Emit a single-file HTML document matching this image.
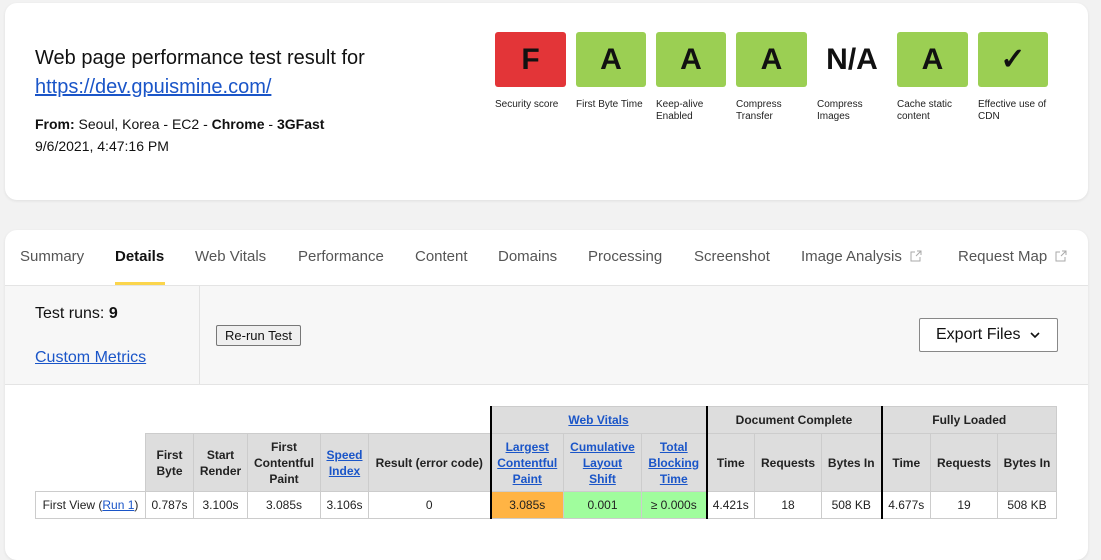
<!DOCTYPE html>
<html><head><meta charset="utf-8"><style>
*{box-sizing:border-box;margin:0;padding:0}
body{width:1101px;height:537px;background:#f2f2f2;font-family:"Liberation Sans",sans-serif;position:relative;overflow:hidden;color:#111}
.card{position:absolute;background:#fff;border-radius:12px;box-shadow:0 1px 3px rgba(0,0,0,.08)}
.abs{position:absolute}
a{color:#1a55c8;text-decoration:underline}
.g{position:absolute;top:32px;width:71px;height:55px;border-radius:3px;background:#9bcf53;font:bold 30px/55px "Liberation Sans",sans-serif;text-align:center;color:#111}
.gl{position:absolute;top:99px;font-size:10px;line-height:12px;color:#222;width:80px}
.tab{position:absolute;top:247px;font-size:15px;color:#555;line-height:20px}
.ext{display:inline-block;width:12px;height:12px;margin-left:8px;vertical-align:-1px}
table{position:absolute;left:35px;top:406px;border-collapse:collapse;table-layout:fixed;font-size:12px}
td,th{border:1px solid #ccc;text-align:center;padding:0;line-height:16px}
th{background:#ddd;font-weight:bold;color:#222}
th.e{background:#fff;border:none}
td{height:27px;color:#222}
.bl{border-left:2px solid #000}
</style></head><body>
<div class="card" style="left:5px;top:3px;width:1083px;height:197px"></div>
<div class="abs" style="left:35px;top:44px;font-size:20px;line-height:28px">Web page performance test result for<br><a href="#" style="line-height:30px">https://dev.gpuismine.com/</a></div>
<div class="abs" style="left:35px;top:113px;font-size:14px;line-height:22px"><b>From:</b> Seoul, Korea - EC2 - <b>Chrome</b> - <b>3GFast</b><br>9/6/2021, 4:47:16 PM</div>
<div class="g" style="left:495px;background:#e33538">F</div>
<div class="g" style="left:576px;width:70px">A</div>
<div class="g" style="left:656px;width:70px">A</div>
<div class="g" style="left:736px">A</div>
<div class="g" style="left:817px;width:70px;background:#fff">N/A</div>
<div class="g" style="left:897px">A</div>
<div class="g" style="left:978px;width:70px">✓</div>
<div class="gl" style="left:495px">Security score</div>
<div class="gl" style="left:576px">First Byte Time</div>
<div class="gl" style="left:656px">Keep-alive<br>Enabled</div>
<div class="gl" style="left:736px">Compress<br>Transfer</div>
<div class="gl" style="left:817px">Compress<br>Images</div>
<div class="gl" style="left:897px">Cache static<br>content</div>
<div class="gl" style="left:978px">Effective use of<br>CDN</div>

<div class="card" style="left:5px;top:230px;width:1083px;height:330px"></div>
<div class="tab" style="left:20px">Summary</div>
<div class="tab" style="left:115px;color:#111;font-weight:bold">Details</div>
<div class="abs" style="left:115px;top:282px;width:50px;height:3px;background:#fbd54c"></div>
<div class="tab" style="left:195px">Web Vitals</div>
<div class="tab" style="left:298px">Performance</div>
<div class="tab" style="left:415px">Content</div>
<div class="tab" style="left:498px">Domains</div>
<div class="tab" style="left:588px">Processing</div>
<div class="tab" style="left:694px">Screenshot</div>
<div class="tab" style="left:801px">Image Analysis<svg class="ext" viewBox="0 0 12 12"><path d="M5 2H1v9h9V7M7 1h4v4M11 1 6 6" fill="none" stroke="#aaa" stroke-width="1"/></svg></div>
<div class="tab" style="left:958px">Request Map<svg class="ext" viewBox="0 0 12 12"><path d="M5 2H1v9h9V7M7 1h4v4M11 1 6 6" fill="none" stroke="#aaa" stroke-width="1"/></svg></div>
<div class="abs" style="left:5px;top:285px;width:1083px;height:100px;background:#f7f7f7;border-top:1px solid #e4e4e4;border-bottom:1px solid #e4e4e4"></div>
<div class="abs" style="left:199px;top:286px;width:1px;height:98px;background:#e2e2e2"></div>
<div class="abs" style="left:35px;top:305px;font-size:16px">Test runs: <b>9</b></div>
<div class="abs" style="left:35px;top:349px;font-size:16px"><a href="#">Custom Metrics</a></div>
<div class="abs" style="left:216px;top:325px;width:85px;height:21px;border:1px solid #777;border-radius:2px;background:#efefef;font-size:13px;line-height:19px;text-align:center">Re-run Test</div>
<div class="abs" style="left:919px;top:318px;width:139px;height:34px;border:1px solid #888;border-radius:2px;background:#fff;font-size:16px;line-height:32px;padding-left:16px">Export Files <svg width="12" height="8" viewBox="0 0 12 8" style="margin-left:4px"><path d="M2 2l4 4 4-4" fill="none" stroke="#111" stroke-width="1.6"/></svg></div>

<table>
<colgroup><col style="width:110px"><col style="width:48px"><col style="width:54px"><col style="width:73px"><col style="width:48px"><col style="width:122px"><col style="width:73px"><col style="width:78px"><col style="width:65px"><col style="width:48px"><col style="width:67px"><col style="width:60px"><col style="width:49px"><col style="width:67px"><col style="width:59px"></colgroup>
<tr style="height:27px"><th class="e" colspan="6"></th><th colspan="3" class="bl"><a href="#">Web Vitals</a></th><th colspan="3" class="bl">Document Complete</th><th colspan="3" class="bl">Fully Loaded</th></tr>
<tr style="height:58px"><th class="e" style="border-bottom:1px solid #ccc"></th><th>First<br>Byte</th><th>Start<br>Render</th><th>First<br>Contentful<br>Paint</th><th><a href="#">Speed<br>Index</a></th><th>Result (error code)</th><th class="bl"><a href="#">Largest<br>Contentful<br>Paint</a></th><th><a href="#">Cumulative<br>Layout<br>Shift</a></th><th><a href="#">Total<br>Blocking<br>Time</a></th><th class="bl">Time</th><th>Requests</th><th>Bytes In</th><th class="bl">Time</th><th>Requests</th><th>Bytes In</th></tr>
<tr><td>First View (<a href="#">Run 1</a>)</td><td>0.787s</td><td>3.100s</td><td>3.085s</td><td>3.106s</td><td>0</td><td class="bl" style="background:#ffb444">3.085s</td><td style="background:#a0fd9d">0.001</td><td style="background:#a0fd9d">≥ 0.000s</td><td class="bl">4.421s</td><td>18</td><td>508 KB</td><td class="bl">4.677s</td><td>19</td><td>508 KB</td></tr>
</table>
</body></html>
